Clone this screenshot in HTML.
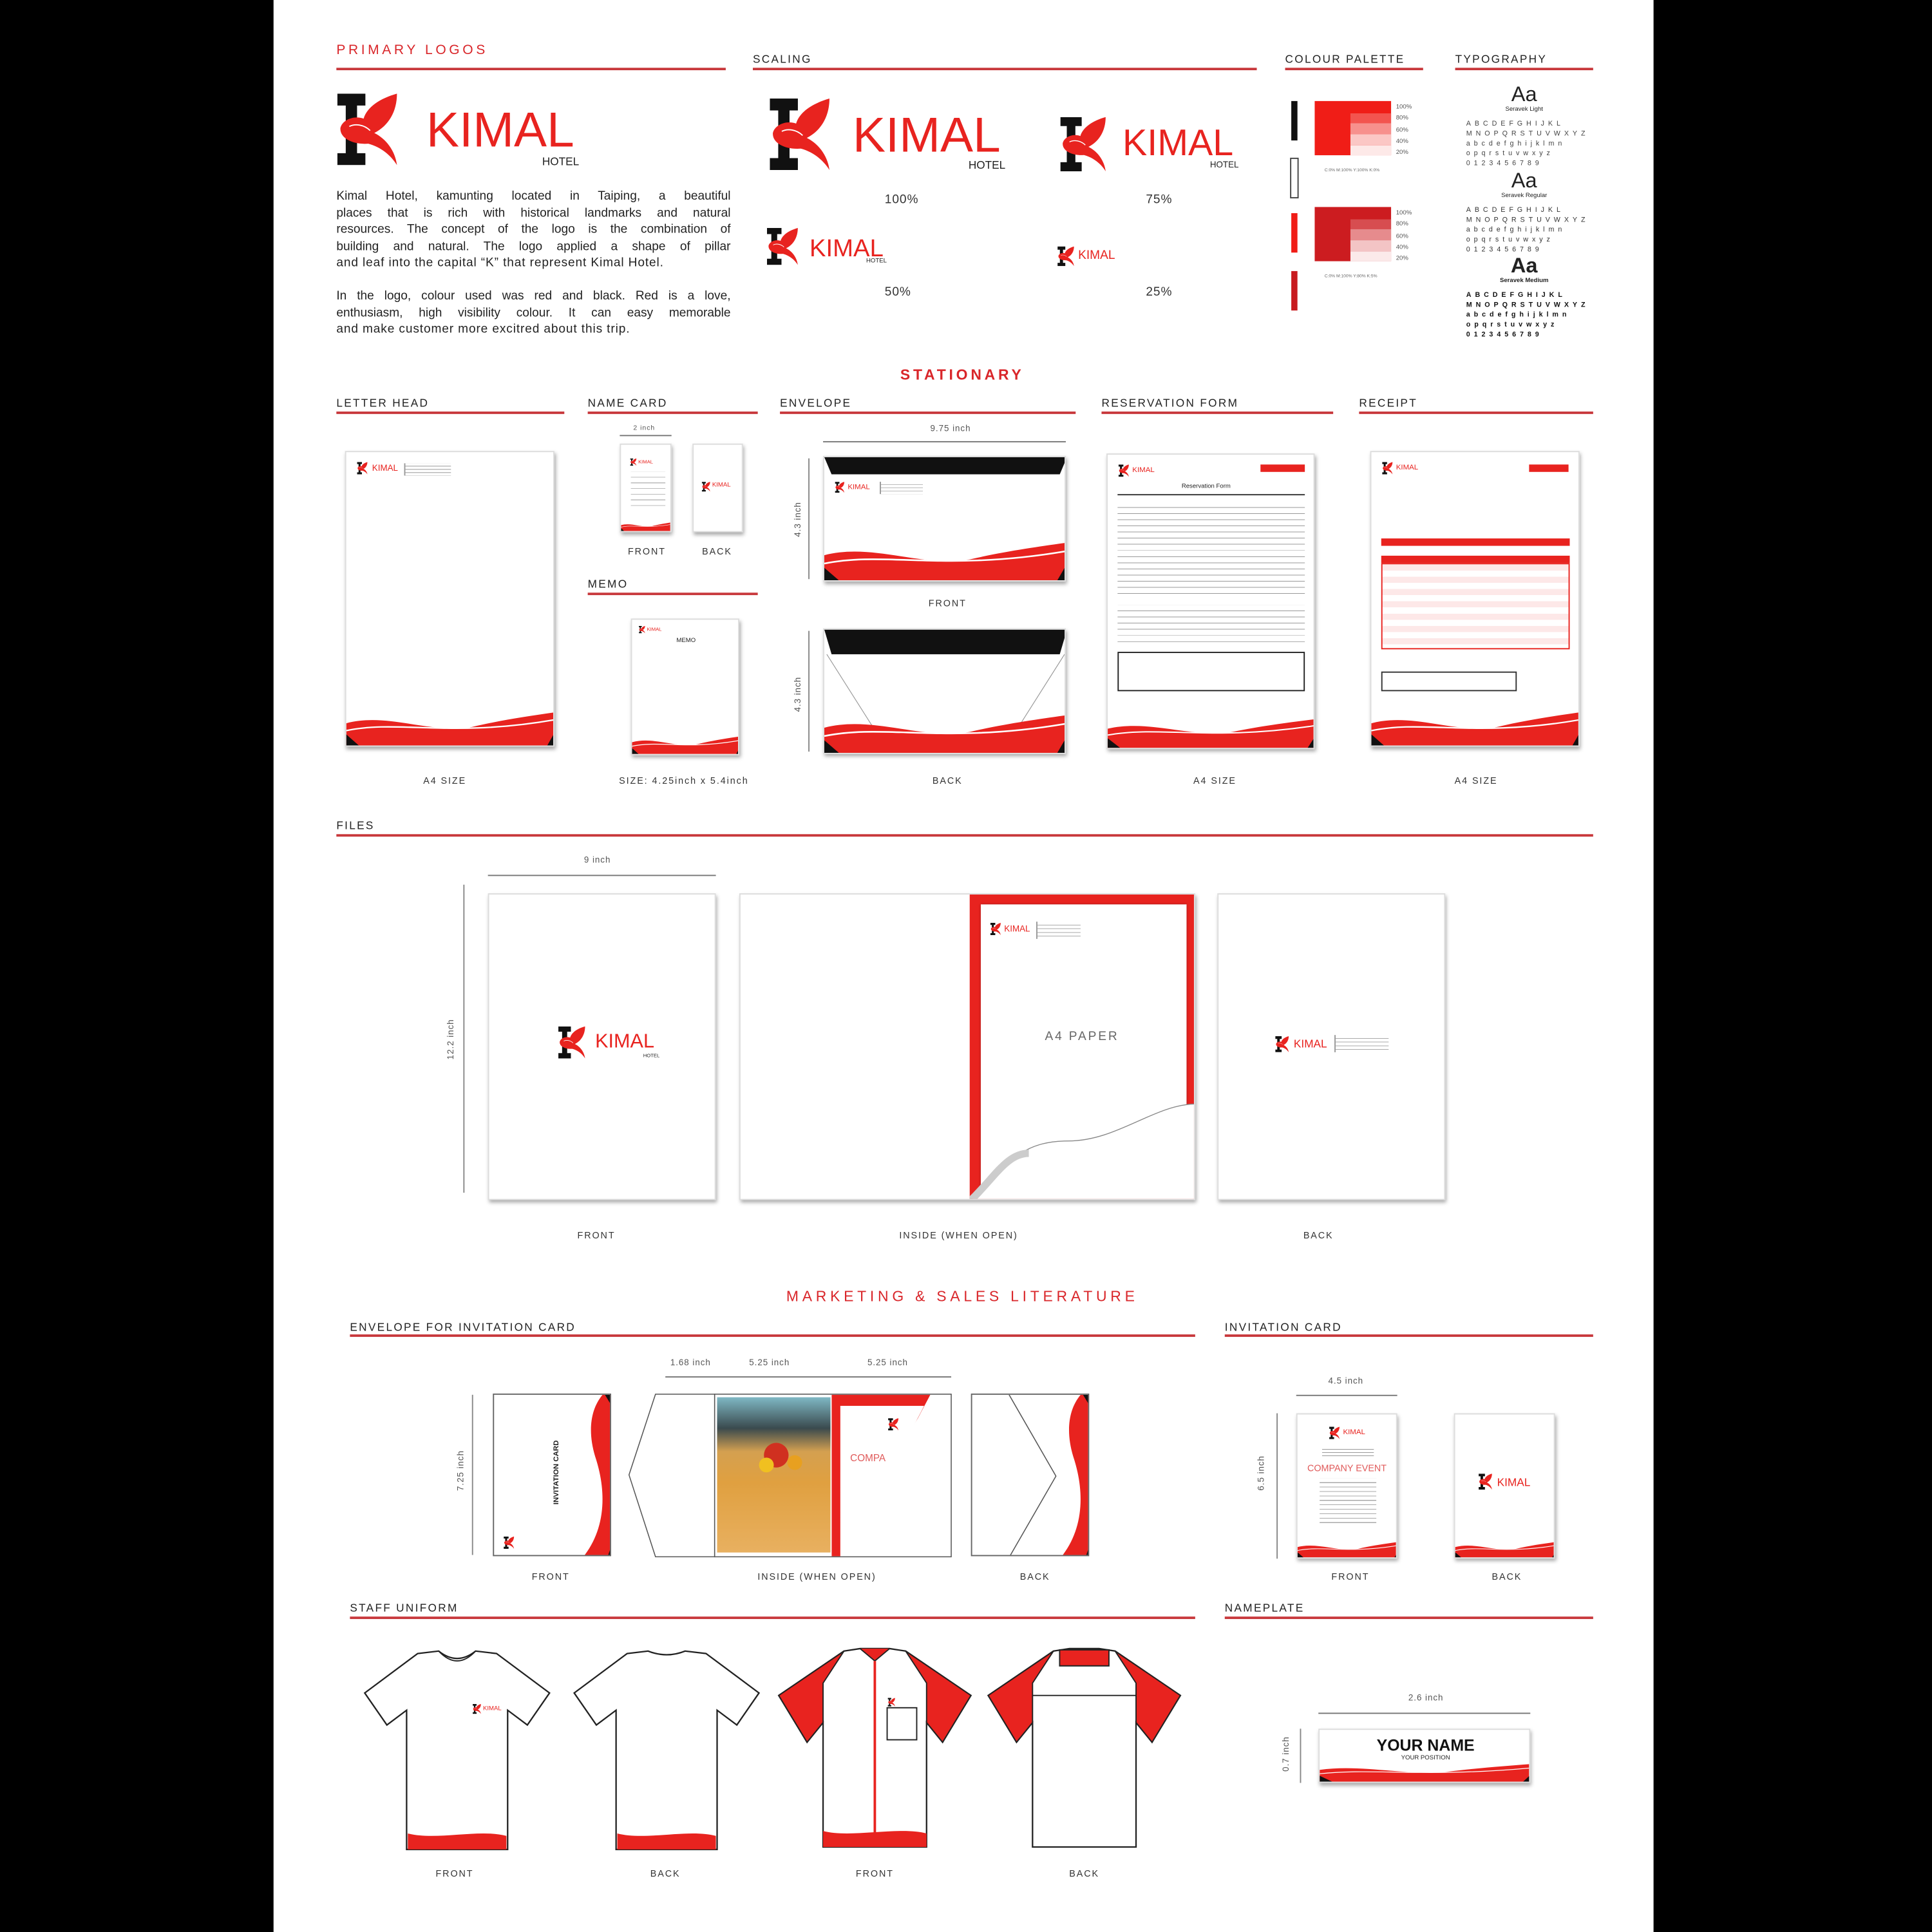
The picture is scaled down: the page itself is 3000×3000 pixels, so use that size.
<!DOCTYPE html>
<html><head><meta charset="utf-8"><style>
*{margin:0;padding:0;box-sizing:border-box}
html,body{width:3000px;height:3000px;background:#000;overflow:hidden}
#w{position:absolute;left:0;top:0;width:1568px;height:1568px;transform:scale(1.913265);transform-origin:0 0;font-family:"Liberation Sans",sans-serif;color:#222}
#pg{position:absolute;left:222px;top:0;width:1120px;height:1568px;background:#fff}
.a{position:absolute}
.h{position:absolute;font-size:9px;letter-spacing:1.2px;color:#222;white-space:nowrap}
.r{color:#d9262a}
.ln{position:absolute;height:1.5px;background:#c8383c}
.lb{position:absolute;font-size:7.5px;letter-spacing:1px;color:#333;white-space:nowrap;transform:translateX(-50%)}
.pp{position:absolute;background:#fff;box-shadow:1px 2px 3px rgba(0,0,0,.35);border:0.5px solid #ddd;overflow:hidden}
.wv{position:absolute;left:0;bottom:0;width:100%}
.km{position:absolute;color:#e8231f;white-space:nowrap;line-height:1}
.dim{position:absolute;background:#888}
.dt{position:absolute;font-size:7px;color:#555;letter-spacing:.5px;white-space:nowrap}
.tl{position:absolute;height:1px;background:#777}
.pl div{text-align:justify;text-align-last:justify;height:13.5px;white-space:nowrap;overflow:hidden}
</style></head><body>
<svg width="0" height="0" style="position:absolute">
<defs>
<symbol id="k" viewBox="0 0 100 120">
<path d="M0 0H47V20H33V100H47V120H0V100H14V20H0Z" fill="#111"/>
<path d="M100 0C72 8 50 22 44 42C28 36 8 44 5 58C4 76 28 86 52 84C74 90 90 104 100 120C97 96 82 76 62 66C86 54 100 30 100 0Z" fill="#e8231f"/>
<path d="M20 55C30 50 45 52 55 62" stroke="#fff" stroke-width="2" fill="none"/>
</symbol>
<symbol id="wave" viewBox="0 0 100 20" preserveAspectRatio="none">
<path d="M0 20V8C20 2 40 14 60 10C75 6 88 4 100 2V20Z" fill="#e8231f"/>
<path d="M0 12C25 6 50 16 100 6" stroke="#fff" stroke-width="0.8" fill="none"/>
<path d="M0 20V14L6 20Z" fill="#111"/><path d="M100 20V12L96 20Z" fill="#111"/>
</symbol>
</defs></svg>
<div id="w"><div id="pg"></div>

<div class="h r" style="left:273px;top:35px;font-size:11px;letter-spacing:2.4px">PRIMARY LOGOS</div>
<div class="ln" style="left:273px;top:55px;width:316px"></div>
<svg class="a" style="left:273px;top:76px" width="50" height="58"><use href="#k"/></svg>
<div class="km" style="left:346px;top:86px;font-size:40px">KIMAL</div>
<div class="a" style="left:440px;top:126px;font-size:9px">HOTEL</div>
<div class="a pl" style="left:273px;top:153px;width:320px;font-size:10px;line-height:13.5px;color:#222">
<div>Kimal Hotel, kamunting located in Taiping, a beautiful</div>
<div>places that is rich with historical landmarks and natural</div>
<div>resources. The concept of the logo is the combination of</div>
<div>building and natural. The logo applied a shape of pillar</div>
<div style="text-align-last:left;letter-spacing:.45px">and leaf into the capital “K” that represent Kimal Hotel.</div>
<div></div>
<div>In the logo, colour used was red and black. Red is a love,</div>
<div>enthusiasm, high visibility colour. It can easy memorable</div>
<div style="text-align-last:left;letter-spacing:.45px">and make customer more excitred about this trip.</div>
</div>

<div class="h" style="left:611px;top:43px">SCALING</div>
<div class="ln" style="left:611px;top:55px;width:409px"></div>
<svg class="a" style="left:620px;top:80px" width="58" height="58"><use href="#k"/></svg>
<div class="km" style="left:692px;top:90px;font-size:40px">KIMAL</div>
<div class="a" style="left:786px;top:129px;font-size:9px">HOTEL</div>
<div class="dt" style="left:718px;top:157px;font-size:10px;color:#333">100%</div>
<svg class="a" style="left:857px;top:95px" width="44" height="44"><use href="#k"/></svg>
<div class="km" style="left:911px;top:102px;font-size:30px">KIMAL</div>
<div class="a" style="left:982px;top:131px;font-size:7px">HOTEL</div>
<div class="dt" style="left:930px;top:157px;font-size:10px;color:#333">75%</div>
<svg class="a" style="left:620px;top:185px" width="30" height="30"><use href="#k"/></svg>
<div class="km" style="left:657px;top:192px;font-size:20px">KIMAL</div>
<div class="a" style="left:703px;top:209px;font-size:5px">HOTEL</div>
<div class="dt" style="left:718px;top:232px;font-size:10px;color:#333">50%</div>
<svg class="a" style="left:857px;top:200px" width="16" height="16"><use href="#k"/></svg>
<div class="km" style="left:875px;top:203px;font-size:10px">KIMAL</div>
<div class="dt" style="left:930px;top:232px;font-size:10px;color:#333">25%</div>

<div class="h" style="left:1043px;top:43px">COLOUR PALETTE</div>
<div class="ln" style="left:1043px;top:55px;width:112px"></div>
<div class="a" style="left:1048px;top:82px;width:5px;height:32px;background:#111"></div>
<div class="a" style="left:1047px;top:128px;width:7px;height:33px;border:1px solid #444"></div>
<div class="a" style="left:1048px;top:173px;width:5px;height:32px;background:#f01d17"></div>
<div class="a" style="left:1048px;top:220px;width:5px;height:32px;background:#c81b1f"></div>
<div class="a" style="left:1067px;top:82px;width:62px;height:44px;background:#f01d17"></div>
<div class="a" style="left:1096px;top:92px;width:33px;height:8px;background:#f3544f"></div>
<div class="a" style="left:1096px;top:100px;width:33px;height:9px;background:#f7908d"></div>
<div class="a" style="left:1096px;top:109px;width:33px;height:9px;background:#fbc7c5"></div>
<div class="a" style="left:1096px;top:118px;width:33px;height:8px;background:#fde9e8"></div>
<div class="a" style="left:1067px;top:168px;width:62px;height:44px;background:#cc1c20"></div>
<div class="a" style="left:1096px;top:178px;width:33px;height:8px;background:#d74d50"></div>
<div class="a" style="left:1096px;top:186px;width:33px;height:9px;background:#e68b8d"></div>
<div class="a" style="left:1096px;top:195px;width:33px;height:9px;background:#f3c4c5"></div>
<div class="a" style="left:1096px;top:204px;width:33px;height:8px;background:#fbeaea"></div>
<div class="a" style="left:1133px;top:83px;font-size:5px;line-height:9.3px;color:#555">100%<br>80%<br>60%<br>40%<br>20%</div>
<div class="a" style="left:1133px;top:169px;font-size:5px;line-height:9.3px;color:#555">100%<br>80%<br>60%<br>40%<br>20%</div>
<div class="a" style="left:1075px;top:136px;font-size:3.5px;color:#666">C:0% M:100% Y:100% K:0%</div>
<div class="a" style="left:1075px;top:222px;font-size:3.5px;color:#666">C:0% M:100% Y:80% K:5%</div>

<div class="h" style="left:1181px;top:43px">TYPOGRAPHY</div>
<div class="ln" style="left:1181px;top:55px;width:112px"></div>
<div class="a" style="left:1190px;top:68px;width:94px;text-align:center;font-size:17px;line-height:18px">Aa<div style="font-size:5px;line-height:6px">Seravek Light</div></div>
<div class="a" style="left:1190px;top:97px;width:94px;font-size:5.6px;letter-spacing:3.1px;line-height:8px;color:#444">ABCDEFGHIJKL MNOPQRSTUVWXYZ abcdefghijklmn opqrstuvwxyz 0123456789</div>
<div class="a" style="left:1190px;top:138px;width:94px;text-align:center;font-size:17px;line-height:18px">Aa<div style="font-size:5px;line-height:6px">Seravek Regular</div></div>
<div class="a" style="left:1190px;top:167px;width:94px;font-size:5.6px;letter-spacing:3.1px;line-height:8px;color:#333">ABCDEFGHIJKL MNOPQRSTUVWXYZ abcdefghijklmn opqrstuvwxyz 0123456789</div>
<div class="a" style="left:1190px;top:207px;width:94px;text-align:center;font-size:17px;line-height:18px;font-weight:bold">Aa<div style="font-size:5px;line-height:6px">Seravek Medium</div></div>
<div class="a" style="left:1190px;top:236px;width:94px;font-size:5.6px;letter-spacing:3.1px;line-height:8px;color:#111;font-weight:bold">ABCDEFGHIJKL MNOPQRSTUVWXYZ abcdefghijklmn opqrstuvwxyz 0123456789</div>

<div class="h r" style="left:781px;top:297px;transform:translateX(-50%);font-size:12px;letter-spacing:2.5px;font-weight:bold">STATIONARY</div>
<div class="h" style="left:273px;top:322px">LETTER HEAD</div><div class="ln" style="left:273px;top:334px;width:185px"></div>
<div class="h" style="left:477px;top:322px">NAME CARD</div><div class="ln" style="left:477px;top:334px;width:138px"></div>
<div class="h" style="left:633px;top:322px">ENVELOPE</div><div class="ln" style="left:633px;top:334px;width:240px"></div>
<div class="h" style="left:894px;top:322px">RESERVATION FORM</div><div class="ln" style="left:894px;top:334px;width:188px"></div>
<div class="h" style="left:1103px;top:322px">RECEIPT</div><div class="ln" style="left:1103px;top:334px;width:190px"></div>
<div class="h" style="left:477px;top:469px">MEMO</div><div class="ln" style="left:477px;top:481px;width:138px"></div>

<div class="pp" style="left:280px;top:366px;width:170px;height:240px">
<svg class="a" style="left:8px;top:8px" width="10" height="10"><use href="#k"/></svg><div class="km" style="left:21px;top:10px;font-size:7px">KIMAL</div>
<div class="a" style="left:47px;top:9px;width:38px;height:10px;border-left:.5px solid #999;background:repeating-linear-gradient(#fff 0 2px,#bbb 2px 2.6px)"></div>
<svg class="wv" width="170" height="30"><use href="#wave" width="170" height="30"/></svg></div>
<div class="lb" style="left:361px;top:629px">A4 SIZE</div>

<div class="pp" style="left:503px;top:360px;width:42px;height:72px">
<svg class="a" style="left:7px;top:11px" width="6" height="6"><use href="#k"/></svg><div class="km" style="left:14px;top:12px;font-size:4px">KIMAL</div>
<div class="a" style="left:8px;top:22px;width:28px;height:30px;background:repeating-linear-gradient(#fff 0 4px,#bbb 4px 4.6px)"></div>
<svg class="wv" width="42" height="8"><use href="#wave" width="42" height="8"/></svg></div>
<div class="pp" style="left:562px;top:360px;width:41px;height:72px">
<svg class="a" style="left:6px;top:30px" width="8" height="8"><use href="#k"/></svg><div class="km" style="left:15px;top:31px;font-size:5px">KIMAL</div></div>
<div class="tl" style="left:503px;top:353px;width:42px"></div><div class="dt" style="left:514px;top:345px;font-size:5.5px">2 inch</div>
<div class="lb" style="left:525px;top:443px">FRONT</div><div class="lb" style="left:582px;top:443px">BACK</div>

<div class="pp" style="left:512px;top:502px;width:88px;height:111px">
<svg class="a" style="left:5px;top:5px" width="6" height="6"><use href="#k"/></svg><div class="km" style="left:12px;top:6px;font-size:4px">KIMAL</div>
<div class="a" style="left:36px;top:14px;font-size:5px">MEMO</div>
<svg class="wv" width="88" height="16"><use href="#wave" width="88" height="16"/></svg></div>
<div class="lb" style="left:555px;top:629px">SIZE: 4.25inch x 5.4inch</div>

<div class="tl" style="left:668px;top:358px;width:197px"></div><div class="dt" style="left:755px;top:345px">9.75 inch</div>
<div class="pp" style="left:668px;top:370px;width:197px;height:102px">
<div class="a" style="left:0;top:0;width:197px;height:14px;background:#111;clip-path:polygon(0 0,100% 0,97% 100%,3% 100%)"></div>
<svg class="a" style="left:8px;top:20px" width="9" height="9"><use href="#k"/></svg><div class="km" style="left:19px;top:22px;font-size:6px">KIMAL</div>
<div class="a" style="left:45px;top:20px;width:35px;height:10px;border-left:.5px solid #999;background:repeating-linear-gradient(#fff 0 2px,#bbb 2px 2.6px)"></div>
<svg class="wv" width="197" height="34"><use href="#wave" width="197" height="34"/></svg></div>
<div class="lb" style="left:769px;top:485px">FRONT</div>
<div class="pp" style="left:668px;top:510px;width:197px;height:102px">
<div class="a" style="left:0;top:0;width:197px;height:20px;background:#111;clip-path:polygon(0 0,100% 0,97% 100%,3% 100%)"></div>
<svg class="a" style="left:0;top:0" width="197" height="102"><path d="M2 20L40 80M195 20L157 80" stroke="#999" stroke-width=".6" fill="none"/></svg>
<svg class="wv" width="197" height="34"><use href="#wave" width="197" height="34"/></svg></div>
<div class="lb" style="left:769px;top:629px">BACK</div>
<div class="a" style="left:656px;top:372px;width:1px;height:98px;background:#888"></div>
<div class="a" style="left:656px;top:512px;width:1px;height:98px;background:#888"></div>
<div class="dt" style="left:634px;top:418px;transform:rotate(-90deg)">4.3 inch</div>
<div class="dt" style="left:634px;top:560px;transform:rotate(-90deg)">4.3 inch</div>

<div class="pp" style="left:898px;top:368px;width:169px;height:240px">
<svg class="a" style="left:8px;top:8px" width="10" height="10"><use href="#k"/></svg><div class="km" style="left:20px;top:10px;font-size:6px">KIMAL</div>
<div class="a" style="left:124px;top:8px;width:36px;height:6px;background:#e8231f"></div>
<div class="a" style="left:60px;top:23px;font-size:5px">Reservation Form</div>
<div class="a" style="left:8px;top:32px;width:152px;height:1px;background:#333"></div>
<div class="a" style="left:8px;top:38px;width:152px;height:75px;background:repeating-linear-gradient(#fff 0 4.5px,#999 4.5px 5px)"></div>
<div class="a" style="left:8px;top:122px;width:152px;height:30px;background:repeating-linear-gradient(#fff 0 4.5px,#999 4.5px 5px)"></div>
<div class="a" style="left:8px;top:160px;width:152px;height:32px;border:1px solid #222"></div>
<svg class="wv" width="169" height="26"><use href="#wave" width="169" height="26"/></svg></div>
<div class="lb" style="left:986px;top:629px">A4 SIZE</div>

<div class="pp" style="left:1112px;top:366px;width:170px;height:240px">
<svg class="a" style="left:8px;top:8px" width="10" height="10"><use href="#k"/></svg><div class="km" style="left:20px;top:10px;font-size:6px">KIMAL</div>
<div class="a" style="left:128px;top:10px;width:32px;height:6px;background:#e8231f"></div>
<div class="a" style="left:8px;top:70px;width:153px;height:6px;background:#e8231f"></div>
<div class="a" style="left:8px;top:84px;width:153px;height:6px;background:#e8231f"></div>
<div class="a" style="left:8px;top:90px;width:153px;height:70px;border:.6px solid #e8231f;background:repeating-linear-gradient(#fde8e8 0 5px,#fff 5px 10px)"></div>
<div class="a" style="left:8px;top:178px;width:110px;height:16px;border:.6px solid #333"></div>
<svg class="wv" width="170" height="30"><use href="#wave" width="170" height="30"/></svg></div>
<div class="lb" style="left:1198px;top:629px">A4 SIZE</div>

<div class="h" style="left:273px;top:665px">FILES</div><div class="ln" style="left:273px;top:677px;width:1020px"></div>
<div class="tl" style="left:396px;top:710px;width:185px"></div><div class="dt" style="left:474px;top:695px">9 inch</div>
<div class="a" style="left:376px;top:718px;width:1px;height:250px;background:#888"></div>
<div class="dt" style="left:350px;top:840px;transform:rotate(-90deg)">12.2 inch</div>
<div class="pp" style="left:396px;top:725px;width:185px;height:249px">
<svg class="a" style="left:54px;top:107px" width="26" height="26"><use href="#k"/></svg><div class="km" style="left:86px;top:112px;font-size:16px">KIMAL</div>
<div class="a" style="left:125px;top:128px;font-size:4px">HOTEL</div></div>
<div class="pp" style="left:600px;top:725px;width:370px;height:249px;overflow:hidden">
<div class="a" style="left:186px;top:0;width:184px;height:249px;background:#e8231f"></div>
<div class="a" style="left:195px;top:8px;width:167px;height:238px;background:#fff;box-shadow:0 0 2px rgba(0,0,0,.4)">
<svg class="a" style="left:7px;top:15px" width="10" height="10"><use href="#k"/></svg><div class="km" style="left:19px;top:17px;font-size:7px">KIMAL</div>
<div class="a" style="left:45px;top:14px;width:36px;height:14px;border-left:.5px solid #999;background:repeating-linear-gradient(#fff 0 2.5px,#aaa 2.5px 3px)"></div>
<div class="a" style="left:52px;top:102px;font-size:10px;letter-spacing:1.5px;color:#666">A4 PAPER</div></div>
<svg class="a" style="left:186px;top:160px" width="184" height="89"><path d="M0 89C30 60 40 40 80 40C120 40 150 10 184 10V89Z" fill="#fff" stroke="#888" stroke-width=".7"/><path d="M0 89C20 70 30 50 48 50" fill="none" stroke="#ccc" stroke-width="6"/></svg>
</div>
<div class="pp" style="left:988px;top:725px;width:185px;height:249px">
<svg class="a" style="left:45px;top:115px" width="13" height="13"><use href="#k"/></svg><div class="km" style="left:61px;top:117px;font-size:9px">KIMAL</div>
<div class="a" style="left:94px;top:114px;width:44px;height:14px;border-left:.5px solid #999;background:repeating-linear-gradient(#fff 0 2.5px,#aaa 2.5px 3px)"></div></div>
<div class="lb" style="left:484px;top:998px">FRONT</div><div class="lb" style="left:778px;top:998px">INSIDE (WHEN OPEN)</div><div class="lb" style="left:1070px;top:998px">BACK</div>

<div class="h r" style="left:781px;top:1045px;transform:translateX(-50%);font-size:12px;letter-spacing:3px">MARKETING &amp; SALES LITERATURE</div>
<div class="h" style="left:284px;top:1072px">ENVELOPE FOR INVITATION CARD</div><div class="ln" style="left:284px;top:1083px;width:686px"></div>
<div class="h" style="left:994px;top:1072px">INVITATION CARD</div><div class="ln" style="left:994px;top:1083px;width:299px"></div>
<div class="tl" style="left:540px;top:1117px;width:232px"></div>
<div class="dt" style="left:544px;top:1103px">1.68 inch</div><div class="dt" style="left:608px;top:1103px">5.25 inch</div><div class="dt" style="left:704px;top:1103px">5.25 inch</div>
<div class="a" style="left:383px;top:1132px;width:1px;height:130px;background:#888"></div>
<div class="dt" style="left:358px;top:1190px;transform:rotate(-90deg)">7.25 inch</div>

<div class="pp" style="left:400px;top:1131px;width:96px;height:132px;box-shadow:none;border:.8px solid #666">
<svg class="a" style="left:0;top:0" width="96" height="132"><path d="M74 0H96V132H72C90 110 92 80 82 50C76 30 78 12 88 0Z" fill="#e8231f"/><path d="M96 0V10L90 0Z M96 132V120L92 132Z" fill="#111"/></svg>
<svg class="a" style="left:7px;top:115px" width="10" height="10"><use href="#k"/></svg>
<div class="a" style="left:25px;top:60px;transform:rotate(-90deg);font-size:6px;font-weight:bold;white-space:nowrap">INVITATION CARD</div></div>
<div class="lb" style="left:447px;top:1275px">FRONT</div>
<svg class="a" style="left:510px;top:1131px" width="263" height="133">
<path d="M70 .5H22L.5 66L22 132.5H70Z" fill="#fff" stroke="#555" stroke-width=".8"/>
<rect x="70" y=".5" width="192" height="132" fill="#fff" stroke="#555" stroke-width=".8"/>
<defs><linearGradient id="ph" x1="0" y1="0" x2="0" y2="1"><stop offset="0" stop-color="#7fb8c4"/><stop offset=".2" stop-color="#3a4a4e"/><stop offset=".35" stop-color="#d4a050"/><stop offset=".55" stop-color="#e0a040"/><stop offset="1" stop-color="#e8b060"/></linearGradient></defs>
<rect x="72" y="3" width="92" height="126" fill="url(#ph)"/>
<circle cx="120" cy="50" r="10" fill="#d03020"/><circle cx="112" cy="58" r="6" fill="#f0c020"/><circle cx="135" cy="56" r="6" fill="#e8a020"/>
<path d="M165 1H245L235 20C210 60 180 90 172 132H165Z" fill="#e8231f"/>
<path d="M172 10H240C215 60 185 90 178 132H172Z" fill="#fff"/>
</svg>
<svg class="a" style="left:720px;top:1151px" width="10" height="10"><use href="#k"/></svg>
<div class="km" style="left:690px;top:1180px;font-size:8px;color:#e05a5a">COMPA</div>
<div class="lb" style="left:663px;top:1275px">INSIDE (WHEN OPEN)</div>
<div class="pp" style="left:788px;top:1131px;width:96px;height:132px;box-shadow:none;border:.8px solid #666">
<svg class="a" style="left:0;top:0" width="96" height="132"><path d="M30 0L68 66L30 132" fill="none" stroke="#555" stroke-width=".8"/><path d="M74 0H96V132H72C90 110 92 80 82 50C76 30 78 12 88 0Z" fill="#e8231f"/><path d="M96 0V10L90 0Z M96 132V120L92 132Z" fill="#111"/></svg></div>
<div class="lb" style="left:840px;top:1275px">BACK</div>

<div class="tl" style="left:1052px;top:1132px;width:82px"></div><div class="dt" style="left:1078px;top:1118px">4.5 inch</div>
<div class="a" style="left:1036px;top:1147px;width:1px;height:118px;background:#888"></div>
<div class="dt" style="left:1010px;top:1192px;transform:rotate(-90deg)">6.5 inch</div>
<div class="pp" style="left:1052px;top:1147px;width:82px;height:118px">
<svg class="a" style="left:25px;top:10px" width="10" height="10"><use href="#k"/></svg><div class="km" style="left:37px;top:12px;font-size:6px">KIMAL</div>
<div class="a" style="left:20px;top:26px;width:42px;height:8px;background:repeating-linear-gradient(#fff 0 2px,#999 2px 2.6px)"></div>
<div class="km" style="left:8px;top:40px;font-size:7.5px;color:#e05a5a">COMPANY EVENT</div>
<div class="a" style="left:18px;top:52px;width:46px;height:38px;background:repeating-linear-gradient(#fff 0 3px,#aaa 3px 3.6px)"></div>
<svg class="wv" width="82" height="14"><use href="#wave" width="82" height="14"/></svg></div>
<div class="pp" style="left:1180px;top:1147px;width:82px;height:118px">
<svg class="a" style="left:18px;top:48px" width="13" height="13"><use href="#k"/></svg><div class="km" style="left:34px;top:51px;font-size:9px">KIMAL</div>
<svg class="wv" width="82" height="14"><use href="#wave" width="82" height="14"/></svg></div>
<div class="lb" style="left:1096px;top:1275px">FRONT</div><div class="lb" style="left:1223px;top:1275px">BACK</div>

<div class="h" style="left:284px;top:1300px">STAFF UNIFORM</div><div class="ln" style="left:284px;top:1312px;width:686px"></div>
<div class="h" style="left:994px;top:1300px">NAMEPLATE</div><div class="ln" style="left:994px;top:1312px;width:299px"></div>

<svg class="a" style="left:294px;top:1338px" width="155" height="168"><path d="M45 4L62 2Q77 14 92 2L109 4L152 36L134 62L118 50L118 163H36V50L20 62L2 36Z" fill="#fff" stroke="#222" stroke-width="1.2"/><path d="M62 2Q77 18 92 2" fill="none" stroke="#222"/><path d="M37 150C60 156 95 146 117 152V163H37Z" fill="#e8231f"/></svg>
<svg class="a" style="left:383px;top:1383px" width="8" height="8"><use href="#k"/></svg><div class="km" style="left:392px;top:1385px;font-size:5px">KIMAL</div>
<svg class="a" style="left:464px;top:1338px" width="155" height="168"><path d="M45 4L62 2Q77 8 92 2L109 4L152 36L134 62L118 50L118 163H36V50L20 62L2 36Z" fill="#fff" stroke="#222" stroke-width="1.2"/><path d="M37 150C60 156 95 146 117 152V163H37Z" fill="#e8231f"/></svg>
<svg class="a" style="left:630px;top:1336px" width="160" height="170"><path d="M55 4L68 2L92 2L105 4L158 40L135 78L122 62V163H38V62L25 78L2 40Z" fill="#fff" stroke="#222" stroke-width="1.2"/><path d="M55 4L2 40L25 78L38 62V30Z M105 4L158 40L135 78L122 62V30Z" fill="#e8231f" stroke="#222"/><path d="M68 2L80 12L92 2" fill="#e8231f" stroke="#222"/><path d="M80 12V163" stroke="#e8231f" stroke-width="2"/><rect x="90" y="50" width="24" height="26" fill="none" stroke="#222"/><path d="M38 150C60 156 100 146 122 152V163H38Z" fill="#e8231f"/></svg>
<svg class="a" style="left:720px;top:1378px" width="7" height="7"><use href="#k"/></svg>
<svg class="a" style="left:800px;top:1336px" width="160" height="170"><path d="M55 4L68 2L92 2L105 4L158 40L135 78L122 62V163H38V62L25 78L2 40Z" fill="#fff" stroke="#222" stroke-width="1.2"/><path d="M55 4L2 40L25 78L38 62V30Z M105 4L158 40L135 78L122 62V30Z" fill="#e8231f" stroke="#222"/><path d="M60 3H100V16H60Z" fill="#e8231f" stroke="#222"/><path d="M38 40H122" stroke="#222"/></svg>
<div class="lb" style="left:369px;top:1516px">FRONT</div><div class="lb" style="left:540px;top:1516px">BACK</div><div class="lb" style="left:710px;top:1516px">FRONT</div><div class="lb" style="left:880px;top:1516px">BACK</div>

<div class="tl" style="left:1070px;top:1390px;width:172px"></div><div class="dt" style="left:1143px;top:1375px">2.6 inch</div>
<div class="a" style="left:1055px;top:1403px;width:1px;height:44px;background:#888"></div>
<div class="dt" style="left:1030px;top:1420px;transform:rotate(-90deg)">0.7 inch</div>
<div class="pp" style="left:1070px;top:1403px;width:172px;height:44px">
<div class="a" style="left:0;top:5px;width:172px;text-align:center;font-size:13px;font-weight:bold;color:#111">YOUR NAME</div>
<div class="a" style="left:0;top:20px;width:172px;text-align:center;font-size:5px">YOUR POSITION</div>
<svg class="wv" width="172" height="16"><use href="#wave" width="172" height="16"/></svg></div>
</div>
</body></html>
